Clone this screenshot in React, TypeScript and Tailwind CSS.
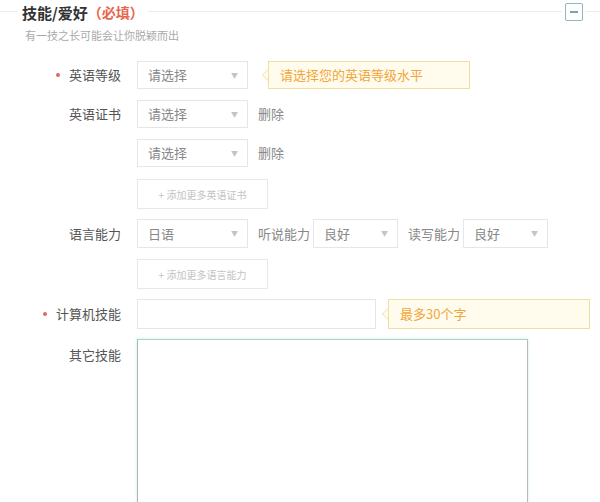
import React from "react";

const font = { fontFamily: '"Noto Sans CJK SC", "Noto Sans", sans-serif' };

function Select({ value, w }: { value: string; w: string }) {
  return (
    <div className={`${w} h-full border border-[#e6e6e6] bg-white flex items-center justify-between pl-[10px] pr-[9px] shrink-0`}>
      <span className="text-[13px] text-[#888]">{value}</span>
      <span className="text-[7px] text-[#c4c4c4]">▼</span>
    </div>
  );
}

function Label({ text, req }: { text: string; req?: boolean }) {
  return (
    <div className="w-[121px] shrink-0 flex items-center justify-end gap-[9px] pr-0 h-[28px]">
      {req && <span className="w-[4px] h-[4px] rounded-full bg-[#e4665c]" />}
      <span className="text-[13px] text-[#555]">{text}</span>
    </div>
  );
}

function Tip({ text, w, ml }: { text: string; w: string; ml: string }) {
  return (
    <div className={`relative ${w} ${ml} h-full shrink-0`}>
      <div className="absolute left-[-6px] top-1/2 -translate-y-1/2 w-0 h-0 border-y-[6px] border-y-transparent border-r-[6px] border-r-[#f0dfa0]" />
      <div className="absolute left-[-5px] top-1/2 -translate-y-1/2 w-0 h-0 border-y-[5px] border-y-transparent border-r-[5px] border-r-[#fffcee]" />
      <div className="h-full border border-[#f0dfa0] bg-[#fffcee] flex items-center pl-[11px] text-[13px] text-[#f2a53a]">
        {text}
      </div>
    </div>
  );
}

function AddBtn({ text }: { text: string }) {
  return (
    <div className="w-[131px] h-[30px] border border-[#e8e8e8] flex items-center justify-center text-[10px] text-[#c4c4c4]">
      + {text}
    </div>
  );
}

export default function App() {
  return (
    <div className="w-[600px] h-[502px] bg-white overflow-hidden relative" style={font}>
      {/* header */}
      <div className="flex items-center h-[22px] mt-[1px]">
        <div className="w-[18px] border-t border-[#ececec] mt-[-1px]" />
        <div className="px-[4px] flex items-center">
          <span className="text-[15px] font-bold text-[#333] leading-none">技能/爱好</span>
          <span className="text-[14px] font-bold text-[#e8664f] leading-none">（必填）</span>
        </div>
        <div className="flex-1 border-t border-[#ececec] mt-[-1px]" />
        <div className="px-[3px]">
          <div className="w-[18px] h-[18px] border border-[#8fb7c0] rounded-[2px] flex items-center justify-center">
            <div className="w-[8px] h-[1.5px] bg-[#7fa3ad]" />
          </div>
        </div>
        <div className="w-[14px] border-t border-[#ececec] mt-[-1px]" />
      </div>
      <div className="pl-[25px] mt-[5px] text-[11px] text-[#aaa] leading-[14px]">有一技之长可能会让你脱颖而出</div>

      <div className="flex flex-col mt-[19px]">
        {/* row 1 */}
        <div className="flex items-center h-[28px] gap-[16px]">
          <Label text="英语等级" req />
          <Select value="请选择" w="w-[111px]" />
          <Tip text="请选择您的英语等级水平" w="w-[202px]" ml="ml-[4px]" />
        </div>
        {/* row 2 */}
        <div className="flex items-center h-[28px] gap-[16px] mt-[11px]">
          <Label text="英语证书" />
          <Select value="请选择" w="w-[111px]" />
          <span className="text-[13px] text-[#888] ml-[-6px]">删除</span>
        </div>
        {/* row 3 */}
        <div className="flex items-center h-[28px] gap-[16px] mt-[11px]">
          <div className="w-[121px] shrink-0" />
          <Select value="请选择" w="w-[111px]" />
          <span className="text-[13px] text-[#888] ml-[-6px]">删除</span>
        </div>
        {/* add */}
        <div className="flex items-center gap-[16px] mt-[12px]">
          <div className="w-[121px] shrink-0" />
          <AddBtn text="添加更多英语证书" />
        </div>
        {/* row 5 */}
        <div className="flex items-center h-[29px] gap-[16px] mt-[10px]">
          <Label text="语言能力" />
          <div className="flex items-center h-full">
            <Select value="日语" w="w-[111px]" />
            <span className="text-[13px] text-[#888] ml-[10px] mr-[3px]">听说能力</span>
            <Select value="良好" w="w-[85px]" />
            <span className="text-[13px] text-[#888] ml-[10px] mr-[3px]">读写能力</span>
            <Select value="良好" w="w-[85px]" />
          </div>
        </div>
        {/* add */}
        <div className="flex items-center gap-[16px] mt-[11px]">
          <div className="w-[121px] shrink-0" />
          <AddBtn text="添加更多语言能力" />
        </div>
        {/* computer */}
        <div className="flex items-center h-[30px] gap-[16px] mt-[10px]">
          <Label text="计算机技能" req />
          <div className="w-[239px] h-full border border-[#e6e6e6] bg-white shrink-0" />
          <Tip text="最多30个字" w="w-[202px]" ml="ml-[-4px]" />
        </div>
        {/* other */}
        <div className="flex items-start gap-[16px] mt-[10px]">
          <div className="pt-[2px]">
            <Label text="其它技能" />
          </div>
          <div className="w-[391px] h-[200px] border border-[#a9d3cf] border-l-[#a8b8b6] border-r-[#b4bcbb] bg-white shrink-0 shadow-[0_0_3px_rgba(120,200,190,0.35)]" />
        </div>
      </div>
    </div>
  );
}
